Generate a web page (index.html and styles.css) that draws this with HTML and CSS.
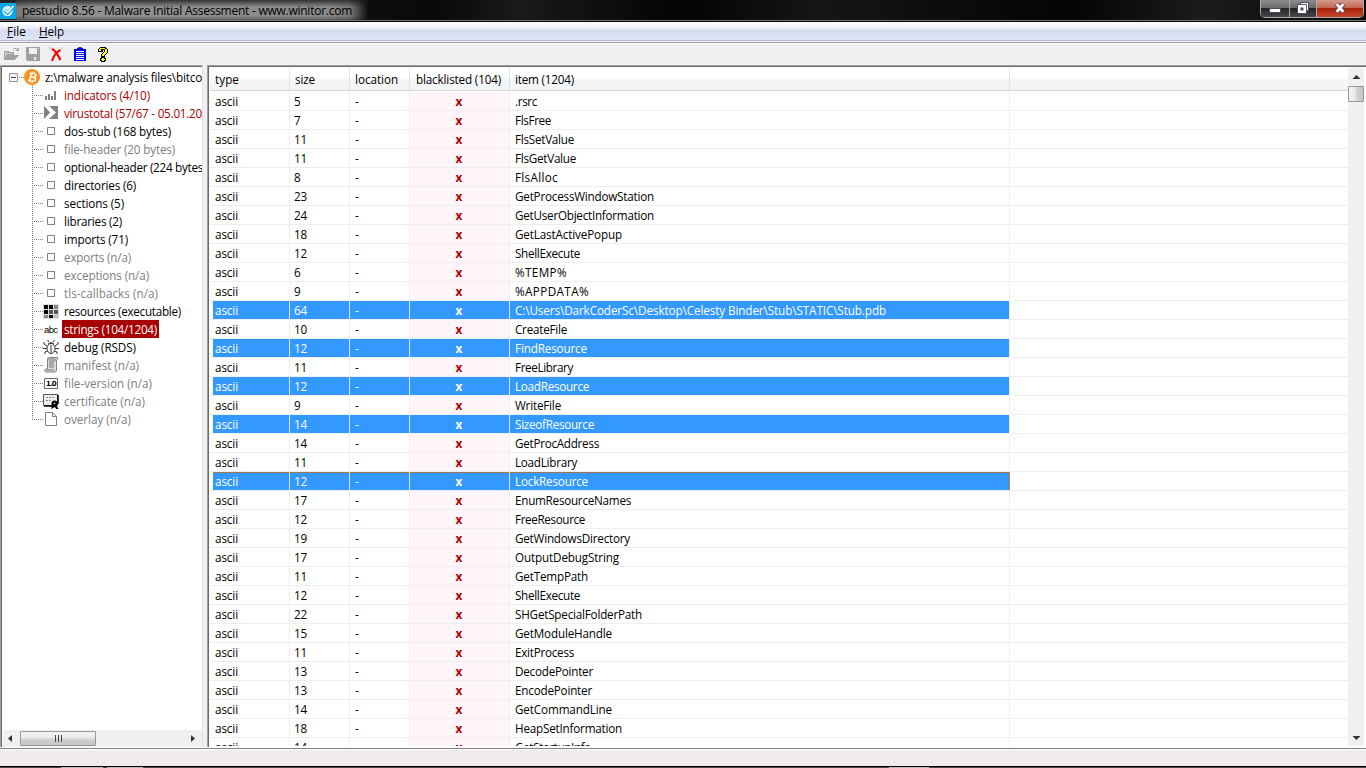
FILE: index.html
```html
<!DOCTYPE html>
<html lang="en">
<head>
<meta charset="utf-8">
<title>pestudio 8.56</title>
<link rel="stylesheet" href="styles.css">
</head>
<body>
<div class="window">
  <header class="titlebar">
    <svg class="app-icon" width="16" height="20" viewBox="0 0 16 20"><path fill="#08a7e5" d="M0 3h16v16H0z"/><circle cx="7.5" cy="11" r="5.2" fill="#d8f3fd"/><path d="M4.5 10l3 3 5.500-6" fill="none" stroke="#08a7e5" stroke-width="3.200"/><path d="M4.500 9.500l3 3 6-6.500" fill="none" stroke="#fff" stroke-width="1.700"/></svg>
    <div class="title-glow"><span data-w="330">pestudio 8.56 - Malware Initial Assessment - www.winitor.com</span></div>
    <div class="caption">
      <div class="cap min"><svg width="14" height="16"><path d="M1.500 7.500h11v4h-11z" fill="#fff" stroke="#444b5a"/></svg></div>
      <div class="cap restore"><svg width="14" height="16"><path d="M4.500 1.500h8v8h-2v3h-9v-9h3z" fill="#fff" stroke="#444b5a"/><path d="M4 3.500h6.500v6" fill="none" stroke="#59606c"/><path d="M4.500 6.500h3v3h-3z" fill="#555"/></svg></div>
      <div class="cap close"><svg width="14" height="16"><path d="M3.500 3l7 8M10.500 3l-7 8" stroke="#5c4650" stroke-width="4.800"/><path d="M3.800 3.200l6.400 7.600M10.200 3.200l-6.400 7.600" stroke="#fff" stroke-width="2.800"/></svg></div>
    </div>
  </header>
  <nav class="menubar"><span data-w="19"><u>F</u>ile</span><span data-w="25"><u>H</u>elp</span></nav>
  <div class="toolbar">
    <svg width="16" height="16" shape-rendering="crispEdges"><path d="M1 5h4l1 1h5v3H5l-4 4H1zM5 9h11l-4 5H1z" fill="#a0a0a0"/><path d="M10 3h1V2h3v1h1V2h1v3h-3V4h1V3h-3v1h-1z" fill="#a0a0a0"/><path d="M2 6h2v1h6v1H4v1H3v2H2z" fill="#ccc"/></svg>
    <svg width="16" height="16" shape-rendering="crispEdges"><path d="M0 1h14v14H1l-1-1z" fill="#a0a0a0"/><path d="M3 2h8v6H3zM8 11h2v3H8z" fill="#f0f0f0"/><path d="M12 2h1v1h-1z" fill="#f0f0f0"/></svg>
    <svg width="16" height="16"><path d="M3 3C6 4 9 9 11.500 14M11.500 4C9 5 5 9 3 15" fill="none" stroke="#f00" stroke-width="2.200"/><path d="M0 1.500l3 1.500M14 1.500l-3 2" stroke="#a0a0a0" stroke-dasharray="1 1"/></svg>
    <svg width="16" height="16" shape-rendering="crispEdges"><path d="M2 3h3V2h6v1h3v12H2z" fill="#00f"/><path d="M6 1h4v1H6z" fill="#448"/><path d="M4 5h8v1H4zM4 7h8v1H4zM4 9h8v1H4zM4 11h8v1H4zM4 13h8v1H4z" fill="#fff"/></svg>
    <svg width="16" height="16" shape-rendering="crispEdges"><path d="M5 1h6v1h1v1h1v4h-1v1h-1v1h-1v2H6V8h1V7h1V6h1V4H8v2H3V3h1V2h1zM6 11h4v1h1v3h-1v1H6v-1H5v-3h1z" fill="#000"/><path d="M5 2h5v1h2v4h-1v1h-1v1H9v1H7V8h1V7h1V6h1V3H6v2H4V3h1zM7 12h2v1h1v1H9v1H7v-1H6v-1h1z" fill="#ff0"/></svg>
  </div>
  <main class="panes">
    <section class="side">
      <div class="tree" id="tree"></div>
      <div class="hscroll">
        <svg width="17" height="17"><path d="M9 5v7L5 8.500z" fill="#333"/></svg>
        <div class="hthumb"><i></i><i></i><i></i></div>
        <div class="fill"></div>
        <svg width="17" height="17"><path d="M6 5v7l4-3.500z" fill="#333"/></svg>
      </div>
    </section>
    <section class="list">
      <div class="grid">
        <div class="row head"><div><span data-w="24">type</span></div><div><span data-w="20">size</span></div><div><span data-w="43">location</span></div><div><span data-w="85">blacklisted (104)</span></div><div><span data-w="59">item (1204)</span></div><div></div></div>
        <div id="rows"></div>
      </div>
      <div class="vscroll">
        <svg width="16" height="18"><path d="M4.500 11h8l-4-4z" fill="#333"/></svg>
        <div class="vthumb"></div>
        <div class="fill"></div>
        <svg width="16" height="17"><path d="M4.500 7h8l-4 4z" fill="#333"/></svg>
      </div>
    </section>
  </main>
  <footer class="status"></footer>
  <div class="taskbar"><i class="tab a"></i><i class="tab b"></i><i class="tab c"></i></div>
</div>
<script src="app.js"></script>
</body>
</html>
```
FILE: styles.css
```css
* { box-sizing: border-box; }
body { margin: 0; width: 1366px; height: 768px; overflow: hidden; background: #f0f0f0; color: #000; font: 11.7px/18px "Open Sans", "Noto Sans", sans-serif; }
svg { display: block; flex: none; }
span { white-space: pre; }
.window { display: flex; flex-direction: column; height: 768px; }
.titlebar { display: flex; height: 21px; background: linear-gradient(90deg, #252525 0, #090909 32%, #1a1a1a 38%, #030303 50%, #161616 60%, #040404 78%, #1b1b1b 88%, #090909); border-bottom: 1px solid #77777a; }
.title-glow { padding: 2px 0 0 6px; width: 352px; background: linear-gradient(rgba(20,20,20,.75) 0, rgba(20,20,20,0) 7px, rgba(20,20,20,0) 16px, rgba(20,20,20,.4) 20px), linear-gradient(90deg, #777 0, #929292 40px, #8a8a8a 310px, #777 334px, rgba(60,60,60,0) 352px); font-size: 12px; }
.caption { display: flex; margin-left: auto; margin-right: 2px; width: 104px; height: 18px; border: 1px solid #aaa; border-top: 0; border-radius: 0 0 5px 5px; overflow: hidden; }
.cap { display: flex; align-items: center; justify-content: center; border-right: 1px solid #aaa; background: linear-gradient(#8d8d8d 0, #6b6b6b 45%, #242424 50%, #484848 100%); }
.min { width: 29px; }
.restore { width: 27px; }
.close { flex: 1; border: 0; background: linear-gradient(#d59a8d 0, #c56753 45%, #a9220a 50%, #c4472a 100%); }
.menubar { display: flex; height: 22px; gap: 13px; padding: 0 7px; border-top: 1px solid #000; background: linear-gradient(#fff 0, #eef1f9 6px, #d5dcef 8px, #dfe5f7 18px, #aeb8d0 18px, #aeb8d0 19px, #f4f4f4 19px, #f4f4f4 20px, #9a9a9a 20px); }
.toolbar { display: flex; height: 22px; gap: 7px; padding: 2px 3px; border-top: 1px solid #fff; background: #f0f0f0; }
.panes { display: flex; height: 683px; border-bottom: 1px solid #fff; background: #f0f0f0; }
.side, .list { border-top: 1px solid #a0a0a0; box-shadow: inset 0 1px #696969, inset 1px 0 #696969; background: #fff; }
.side { display: flex; flex-direction: column; width: 203px; padding: 2px 0 0 2px; border-left: 1px solid #a0a0a0; border-right: 1px solid #e3e3e3; }
.tree { flex: 1; position: relative; overflow: hidden; }
.tree::before { content: ""; position: absolute; left: 29px; top: 17px; height: 335px; border-left: 1px dotted #808080; }
.node { display: flex; height: 18px; padding-left: 31px; align-items: center; }
.node::before { content: ""; flex: none; width: 9px; height: 1px; margin-top: 1px; border-top: 1px dotted #808080; }
.node svg { width: 16px; height: 16px; }
.node .label { flex: none; margin-left: 3px; padding: 0 2px; height: 18px; }
.node.root { padding-left: 6px; }
.root::before { display: none; }
.node.root svg { width: 33px; }
.node.root .label { margin-left: 1px; }
.red { color: #a80000; }
.gray { color: #808080; }
.sel .label { background: #a80000; color: #fff; }
.hscroll { display: flex; height: 17px; background: #f0f0f0; }
.hthumb { display: flex; gap: 2px; align-items: center; justify-content: center; width: 76px; margin: 1px 0; border: 1px solid #979797; border-radius: 1px; background: linear-gradient(#f5f5f5 0, #e9e9eb 48%, #d4d4d7 52%, #c5c5c9); }
.hthumb i { width: 1px; height: 7px; background: #444; }
.fill { flex: 1; }
.list { display: flex; flex: 1; margin-left: 4px; padding: 2px 2px 1px 2px; border-left: 1px solid #a0a0a0; min-width: 0; }
.grid { flex: 1; overflow: hidden; }
.row { display: grid; grid-template-columns: 80px 60px 60px 100px 500px 1fr; height: 19px; border-bottom: 1px solid #eee; }
.row > div { border-right: 1px solid #eee; padding-left: 5px; overflow: hidden; }
.row > div:nth-child(2) { padding-left: 4px; }
.row > div:last-child { border: 0; }
.head { height: 24px; line-height: 23px; border-bottom: 0; background: linear-gradient(#fff 0, #fff 10px, #f6f7f9 11px, #f1f3f5 22px, #d5d5d5 22px, #d5d5d5 23px, #fff 23px); }
.head > div { border-right-color: #e1e4e7; }
.head > div:nth-child(2) { padding-left: 5px; }
.head > div:nth-child(4) { padding-left: 6px; }
.row > .x { padding: 0 1px 0 0; text-align: center; font-weight: 700; color: #a80000; background: #fff5fa; }
.picked > div:not(:last-child) { background: #39f; color: #fff; border-right-color: #d9e8f8; }
.picked > div:first-child { background: linear-gradient(90deg, #fff 3px, #39f 3px); }
.picked > div:nth-child(5) { border-right-color: #eee; }
.row.focus > div:not(:last-child) { background: repeating-linear-gradient(90deg, #d46a0c 0 1px, #6a8590 1px 2px) 0 0 / 100% 1px no-repeat #39f; }
.row.focus > div:first-child { background: linear-gradient(90deg, #fff 3px, transparent 3px), repeating-linear-gradient(90deg, #d46a0c 0 1px, #6a8590 1px 2px) 0 0 / 100% 1px no-repeat #39f; }
.row.focus > div:nth-child(5) { border-right: 1px solid #c8742b; }
.vscroll { display: flex; flex-direction: column; width: 16px; background: #f0f0f0; }
.vthumb { height: 16px; border: 1px solid #979797; border-radius: 1px; background: linear-gradient(90deg, #f5f5f5 0, #e8e8ea 45%, #d2d2d5 55%, #c5c5ca); }
.status { height: 18px; border-top: 1px solid #808080; background: #f0eceb; box-shadow: inset 0 1px #fff; }
.taskbar { display: flex; height: 2px; border-top: 1px solid #000; background: #4a4746; }
.tab { height: 1px; background: #bbb; }
.a { width: 42px; margin-left: 61px; }
.b { width: 36px; margin-left: 4px; }
.c { width: 40px; margin-left: 746px; }
```
FILE: app.js
```js
const icons = {
  root: '<svg viewBox="0 0 33 16" style="overflow:visible"><path d="M.5 4.500h8v8h-8z" fill="#f5f5f5" stroke="#919191"/><path d="M2 8.500h5" stroke="#31469b"/><path d="M10 8.500h6" stroke="#808080" stroke-dasharray="1 1"/><circle cx="23" cy="8" r="8" fill="#f7931a"/><g transform="rotate(12 23 8)" fill="none" stroke="#fff"><path d="M21.500 4v8M20 4.500h4.500q2 0 2 1.700t-2 1.700h-3M24 8q3 0 3 2t-3 2h-4.500" stroke-width="1.500"/><path d="M22.500 2.500v2M24.500 2.500v2M22.500 12v2M24.500 12v2"/></g></svg>',
  bars: '<svg viewBox="0 0 16 16"><path d="M2 9h2v4H2zM5 7h2v6H5zM8 9h2v4H8zM11 4h2v9h-2z" fill="#808080"/></svg>',
  vt: '<svg viewBox="0 0 16 16"><path d="M1 1h14v13H1z" fill="#808080"/><path d="M1 1h5l7 6.500L6 14H1l6-6.500z" fill="#fff"/><path d="M1 2l6 5.500L1 13z" fill="#808080"/></svg>',
  sq: '<svg viewBox="0 0 16 16"><path d="M4.500 4.500h7v7h-7z" fill="#fff" stroke="#808080"/></svg>',
  res: '<svg viewBox="0 0 16 16" shape-rendering="crispEdges"><path d="M0 1h16v15H0z" fill="#ddd"/><path d="M1 2h4v4H1zM6 2h4v4H6zM1 7h4v4H1z" fill="#000"/><path d="M11 2h4v4h-4zM1 12h4v3H1z" fill="#888"/><path d="M6 7h4v4H6zM11 7h4v4h-4z" fill="#555"/><path d="M6 12h4v3H6z" fill="#000"/><path d="M11 12h4v3h-4z" fill="#bbb"/></svg>',
  abc: '<svg viewBox="0 0 16 16"><text x="1" y="12" textLength="14" font-size="9.500" font-family="Liberation Sans">abc</text></svg>',
  bug: '<svg viewBox="0 0 16 16"><g fill="none" stroke="#333"><ellipse cx="8" cy="9.500" rx="4" ry="5"/><path d="M5 5q3-3 6 0M8 6v8M4 7L1 5V3M12 7l3-2V3M4 9.500H0M12 9.500h4M4.500 12L2 13v2M11.500 12l2.500 1v2M6 3L4.500 1M10 3l1.500-2"/></g></svg>',
  scroll: '<svg viewBox="0 0 16 16"><path d="M4.500 2.500q0-2 2-2h8q1 2-1 3v9.500q0 2-2 2h-9q-2-2 0-3h2z" fill="#ddd" stroke="#808080"/><path d="M4 2h8v2H6M6 6h5M6 8h5M6 10h5M3 13h8" stroke="#777" fill="none"/></svg>',
  ver: '<svg viewBox="0 0 16 16"><path d="M1.500 3.500h13v10h-13z" fill="#fff" stroke="#666"/><text x="3" y="11" textLength="10.500" font-size="7" font-weight="bold" font-family="DejaVu Sans">1.0</text></svg>',
  cert: '<svg viewBox="0 0 16 16"><path d="M.5 1.500h14v11H.5z" fill="#eee" stroke="#555"/><path d="M15 2v9M1 13h9" stroke="#000" stroke-width="1.500"/><path d="M3 4.500h9M3 7.500h6" stroke="#888" stroke-dasharray="2 1"/><circle cx="11.500" cy="10.500" r="3" fill="#000"/><circle cx="11.500" cy="10.500" r="1" fill="#aaa"/><path d="M9 12l-1 4 2-1 1.500-1 2 2h2l-2-4z"/></svg>',
  page: '<svg viewBox="0 0 16 16"><path d="M2.500 1.500h7l4 4v9h-11zM9.500 1.500v4h4" fill="#fff" stroke="#808080"/></svg>'
};
const nodes = [
  ['root', 'z:\\malware analysis files\\bitco', 157, 'root'],
  ['bars', 'indicators (4/10)', 86, 'red'],
  ['vt', 'virustotal (57/67 - 05.01.20', 138, 'red'],
  ['sq', 'dos-stub (168 bytes)', 107, ''],
  ['sq', 'file-header (20 bytes)', 111, 'gray'],
  ['sq', 'optional-header (224 bytes', 139, ''],
  ['sq', 'directories (6)', 72, ''],
  ['sq', 'sections (5)', 60, ''],
  ['sq', 'libraries (2)', 58, ''],
  ['sq', 'imports (71)', 64, ''],
  ['sq', 'exports (n/a)', 67, 'gray'],
  ['sq', 'exceptions (n/a)', 85, 'gray'],
  ['sq', 'tls-callbacks (n/a)', 94, 'gray'],
  ['res', 'resources (executable)', 117, ''],
  ['abc', 'strings (104/1204)', 93, 'sel'],
  ['bug', 'debug (RSDS)', 72, ''],
  ['scroll', 'manifest (n/a)', 75, 'gray'],
  ['ver', 'file-version (n/a)', 88, 'gray'],
  ['cert', 'certificate (n/a)', 81, 'gray'],
  ['page', 'overlay (n/a)', 67, 'gray']
];
document.getElementById('tree').innerHTML = nodes.map(([icon, text, w, cls]) =>
  `<div class="node ${cls}">${icons[icon]}<div class="label"><span data-w="${w}">${text}</span></div></div>`).join('');

const items = [
  [5, '.rsrc', 22], [7, 'FlsFree', 36], [11, 'FlsSetValue', 59], [11, 'FlsGetValue', 61], [8, 'FlsAlloc', 43],
  [23, 'GetProcessWindowStation', 139], [24, 'GetUserObjectInformation', 139], [18, 'GetLastActivePopup', 107],
  [12, 'ShellExecute', 65], [6, '%TEMP%', 52], [9, '%APPDATA%', 74],
  [64, 'C:\\Users\\DarkCoderSc\\Desktop\\Celesty Binder\\Stub\\STATIC\\Stub.pdb', 371, 'picked'],
  [10, 'CreateFile', 52], [12, 'FindResource', 72, 'picked'], [11, 'FreeLibrary', 58], [12, 'LoadResource', 74, 'picked'],
  [9, 'WriteFile', 46], [14, 'SizeofResource', 79, 'picked'], [14, 'GetProcAddress', 84], [11, 'LoadLibrary', 62],
  [12, 'LockResource', 73, 'picked focus'], [17, 'EnumResourceNames', 116], [12, 'FreeResource', 70],
  [19, 'GetWindowsDirectory', 115], [17, 'OutputDebugString', 104], [11, 'GetTempPath', 73], [12, 'ShellExecute', 65],
  [22, 'SHGetSpecialFolderPath', 127], [15, 'GetModuleHandle', 97], [11, 'ExitProcess', 59], [13, 'DecodePointer', 78],
  [13, 'EncodePointer', 77], [14, 'GetCommandLine', 97], [18, 'HeapSetInformation', 107], [14, 'GetStartupInfo', 76]
];
document.getElementById('rows').innerHTML = items.map(([size, text, w, cls = '']) =>
  `<div class="row ${cls}"><div><span data-w="23">ascii</span></div><div><span data-w="${size > 9 ? 13 : 6.5}">${size}</span></div><div>-</div><div class="x">x</div><div><span data-w="${w}">${text}</span></div><div></div></div>`).join('');

document.querySelectorAll('[data-w]').forEach(el => {
  const gap = (Number(el.dataset.w) - el.getBoundingClientRect().width) / el.textContent.length;
  el.style.letterSpacing = gap.toFixed(3) + 'px';
});
```
